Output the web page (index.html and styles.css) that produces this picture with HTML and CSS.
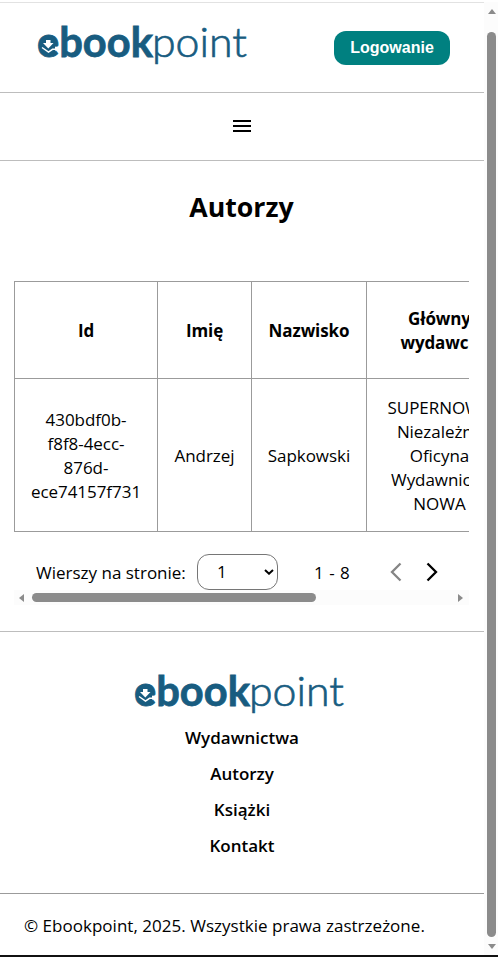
FILE: index.html
```html
<!DOCTYPE html>
<html lang="pl">
<head>
<meta charset="utf-8">
<title>Autorzy</title>
<link rel="stylesheet" href="styles.css">
</head>
<body>
<svg width="0" height="0" class="defs" aria-hidden="true">
  <symbol id="logo" viewBox="0 0 212 56">
    <text x="0" y="39" class="logo-bold" textLength="116" lengthAdjust="spacingAndGlyphs">ebook</text>
    <text x="115" y="39" class="logo-light" textLength="95" lengthAdjust="spacingAndGlyphs">point</text>
    <path d="M5 20h13v16H5z" fill="#185c80"/>
    <path d="M9 22h4.500v3h3l-5.200 5.500L6 25h3z" fill="#fff"/>
    <path d="M5 29.500l6.500 4.500 4-2.700h6.500" fill="none" stroke="#fff" stroke-width="1.500"/>
  </symbol>
</svg>
<div class="screen">
  <div class="page">
    <header class="header">
      <svg class="logo" width="212" height="56"><use href="#logo"/></svg>
      <button class="login">Logowanie</button>
    </header>
    <nav class="menu">
      <svg width="18" height="12" viewBox="0 0 18 12"><path d="M0 1h18M0 6h18M0 11h18" stroke="#000" stroke-width="2"/></svg>
    </nav>
    <main class="main">
      <h1 class="title">Autorzy</h1>
      <div class="table-box">
        <table class="table">
          <colgroup><col class="c1"><col class="c2"><col class="c3"><col class="c4"></colgroup>
          <tr class="head"><th>Id</th><th>Imię</th><th>Nazwisko</th><th>Główny<br>wydawca</th></tr>
          <tr class="row"><td>430bdf0b-<br>f8f8-4ecc-<br>876d-<br>ece74157f731</td><td>Andrzej</td><td>Sapkowski</td><td>SUPERNOWA<br>Niezależna<br>Oficyna<br>Wydawnicza<br>NOWA</td></tr>
        </table>
        <div class="pager">
          <span class="pager-label">Wierszy na stronie:</span>
          <span class="select">1<svg width="10" height="6" viewBox="0 0 10 6"><path d="M1 1l4 3.700L9 1" fill="none" stroke="#000" stroke-width="2"/></svg></span>
          <span class="range">1 - 8</span>
          <svg class="prev" width="12" height="20" viewBox="0 0 12 20"><path d="M10.500 1.500L2 10l8.500 8.500" fill="none" stroke="#858585" stroke-width="2.300"/></svg>
          <svg class="next" width="12" height="20" viewBox="0 0 12 20"><path d="M1.500 1.500L10 10l-8.500 8.500" fill="none" stroke="#000" stroke-width="2.300"/></svg>
        </div>
        <div class="hscroll"><i class="arrow-left"></i><i class="hthumb"></i><i class="arrow-right"></i></div>
      </div>
    </main>
    <footer class="footer">
      <svg class="logo" width="212" height="56"><use href="#logo"/></svg>
      <a class="link">Wydawnictwa</a>
      <a class="link">Autorzy</a>
      <a class="link">Książki</a>
      <a class="link">Kontakt</a>
    </footer>
    <div class="copyright"><span>© Ebookpoint, 2025. Wszystkie prawa zastrzeżone.</span></div>
  </div>
  <div class="vscroll"><i class="arrow-up"></i><i class="vthumb"></i><i class="arrow-down"></i></div>
</div>
</body>
</html>
```
FILE: styles.css
```css
* { box-sizing: border-box; }
body { margin: 0; background: #fff; color: #000; font: 17px/24px "Open Sans", "Noto Sans", sans-serif; overflow: hidden; }
.defs { position: absolute; }
.logo { flex: none; }
.logo-bold, .logo-light { font-family: Lato, sans-serif; font-size: 42px; fill: #185c80; }
.logo-bold { font-weight: 700; stroke: #185c80; stroke-width: .8px; }
.logo-light { font-weight: 300; stroke: #185c80; stroke-width: .7px; }
.screen { display: flex; height: 957px; border-top: 1px solid #fff; border-bottom: 2px solid #111; padding-top: 1px; }
.page { width: 484px; border-top: 1px solid #e2e2e2; display: flex; flex-direction: column; }
.header { height: 90px; border-bottom: 1px solid #bdbdbd; display: flex; align-items: flex-start; padding: 15px 34px 0 37px; justify-content: space-between; }
.login { width: 116px; height: 34px; margin-top: 13px; padding: 0 0 1px; border: 0; border-radius: 12px; background: #008080; color: #fff; font: bold 16px "Liberation Sans", sans-serif; }
.menu { height: 68px; border-bottom: 1px solid #bdbdbd; display: flex; align-items: center; justify-content: center; padding-bottom: 2px; }
.main { height: 471px; border-bottom: 1px solid #bdbdbd; padding: 28px 15px 0 14px; }
.title { margin: 0; text-align: center; font-size: 26.7px; line-height: 36px; font-weight: 700; }
.table-box { margin-top: 56px; width: 455px; overflow: hidden; }
.table { table-layout: fixed; width: 498px; border-collapse: collapse; text-align: center; }
.table th, .table td { border: 1px solid #9b9b9b; padding: 2px 0 0; }
.c1 { width: 143px; } .c2 { width: 94px; } .c3 { width: 115px; } .c4 { width: 146px; }
.head { height: 97px; letter-spacing: -.1px; }
.row { height: 153px; letter-spacing: -.05px; }
.pager { height: 58px; display: flex; align-items: center; padding: 22px 0 1px 22px; }
.pager-label { width: 161px; white-space: nowrap; padding-top: 2px; }
.select { width: 81px; height: 36px; border: 1px solid #767676; border-radius: 12px; display: flex; align-items: center; justify-content: space-between; padding: 0 3px 0 19px; }
.range { margin-left: 36px; width: 76px; white-space: nowrap; letter-spacing: .5px; padding-top: 2px; }
.next { margin-left: 24px; }
.hscroll { height: 15px; background: #fcfcfc; display: flex; align-items: center; padding: 0 6px 0 5px; }
.hthumb { width: 284px; height: 9px; border-radius: 5px; background: #8b8b8b; margin: 0 auto 0 8px; }
.arrow-left { border: 4.5px solid transparent; border-left: 0; border-right: 5px solid #8b8b8b; }
.arrow-right { border: 4.5px solid transparent; border-right: 0; border-left: 5px solid #8b8b8b; }
.footer { height: 262px; display: flex; flex-direction: column; align-items: center; padding: 35px 0 0; border-bottom: 1px solid #9b9b9b; }
.footer .logo { margin: 0 4px 3px 0; }
.footer .link { height: 36px; line-height: 24px; font-weight: 600; flex: none; }
.copyright { padding: 20px 0 0 24px; white-space: nowrap; letter-spacing: .02px; }
.vscroll { width: 14px; background: #fcfcfc; display: flex; flex-direction: column; align-items: center; padding: 7px 0 6px 1px; }
.vthumb { width: 9px; height: 905px; border-radius: 5px; background: #8b8b8b; margin: 18px 0 auto; }
.arrow-up { border: 4.5px solid transparent; border-top: 0; border-bottom: 5px solid #8b8b8b; }
.arrow-down { border: 4.5px solid transparent; border-bottom: 0; border-top: 5px solid #8b8b8b; }
```
